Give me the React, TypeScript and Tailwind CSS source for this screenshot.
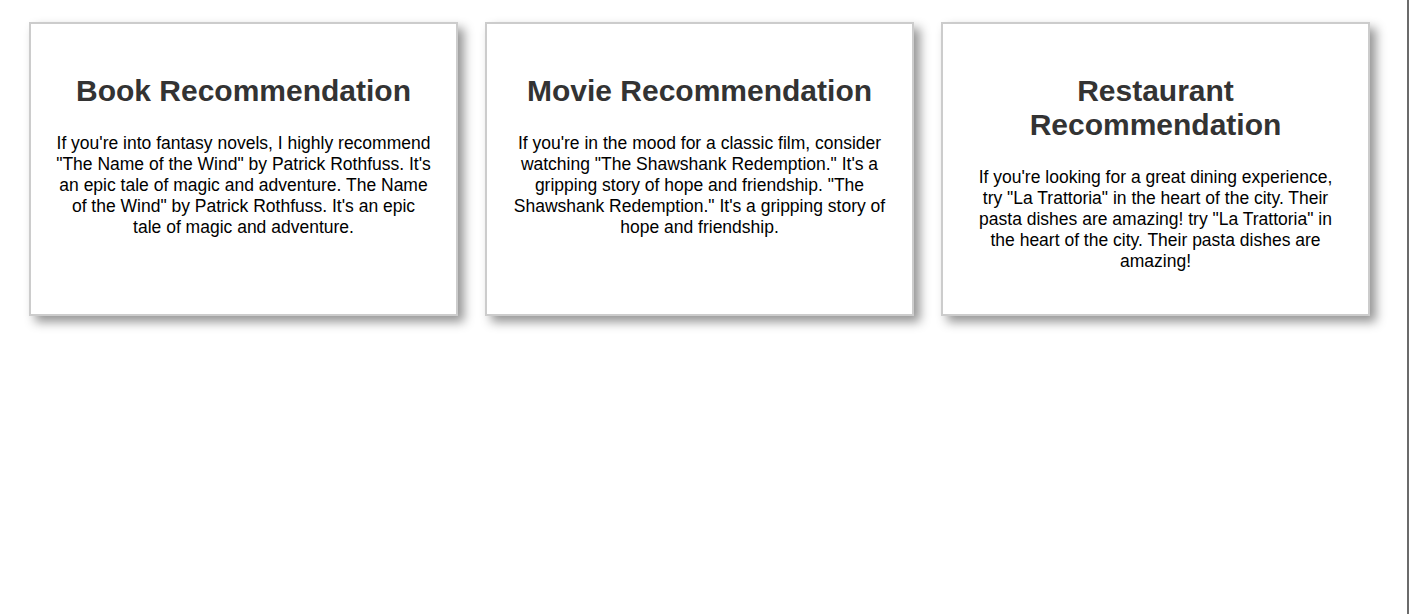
const CARDS = [
  {
    title: "Book Recommendation",
    body: "If you're into fantasy novels, I highly recommend \"The Name of the Wind\" by Patrick Rothfuss. It's an epic tale of magic and adventure. The Name of the Wind\" by Patrick Rothfuss. It's an epic tale of magic and adventure.",
  },
  {
    title: "Movie Recommendation",
    body: "If you're in the mood for a classic film, consider watching \"The Shawshank Redemption.\" It's a gripping story of hope and friendship. \"The Shawshank Redemption.\" It's a gripping story of hope and friendship.",
  },
  {
    title: "Restaurant Recommendation",
    body: "If you're looking for a great dining experience, try \"La Trattoria\" in the heart of the city. Their pasta dishes are amazing! try \"La Trattoria\" in the heart of the city. Their pasta dishes are amazing!",
  },
] as const;

function RecommendationCard({ title, body }: { title: string; body: string }) {
  return (
    <div className="h-[294px] w-[429px] shrink-0 border-2 border-[#cccccc] bg-white p-[25px] text-center shadow-[6px_6px_10px_rgba(0,0,0,0.42)]">
      <h2 className="mt-[25px] mb-[25px] text-[30px] font-bold leading-[34px] text-[#333333]">{title}</h2>
      <p className="text-[17.5px] leading-[21px] text-black">{body}</p>
    </div>
  );
}

export default function App() {
  return (
    <div className="h-[614px] w-[1409px] border-r-2 border-[#6b6b6b] bg-white font-['Liberation_Sans',Arial,sans-serif]">
      <div className="flex gap-[27px] pt-[22px] pl-[29px]">
        {CARDS.map((card) => (
          <RecommendationCard key={card.title} title={card.title} body={card.body} />
        ))}
      </div>
    </div>
  );
}
